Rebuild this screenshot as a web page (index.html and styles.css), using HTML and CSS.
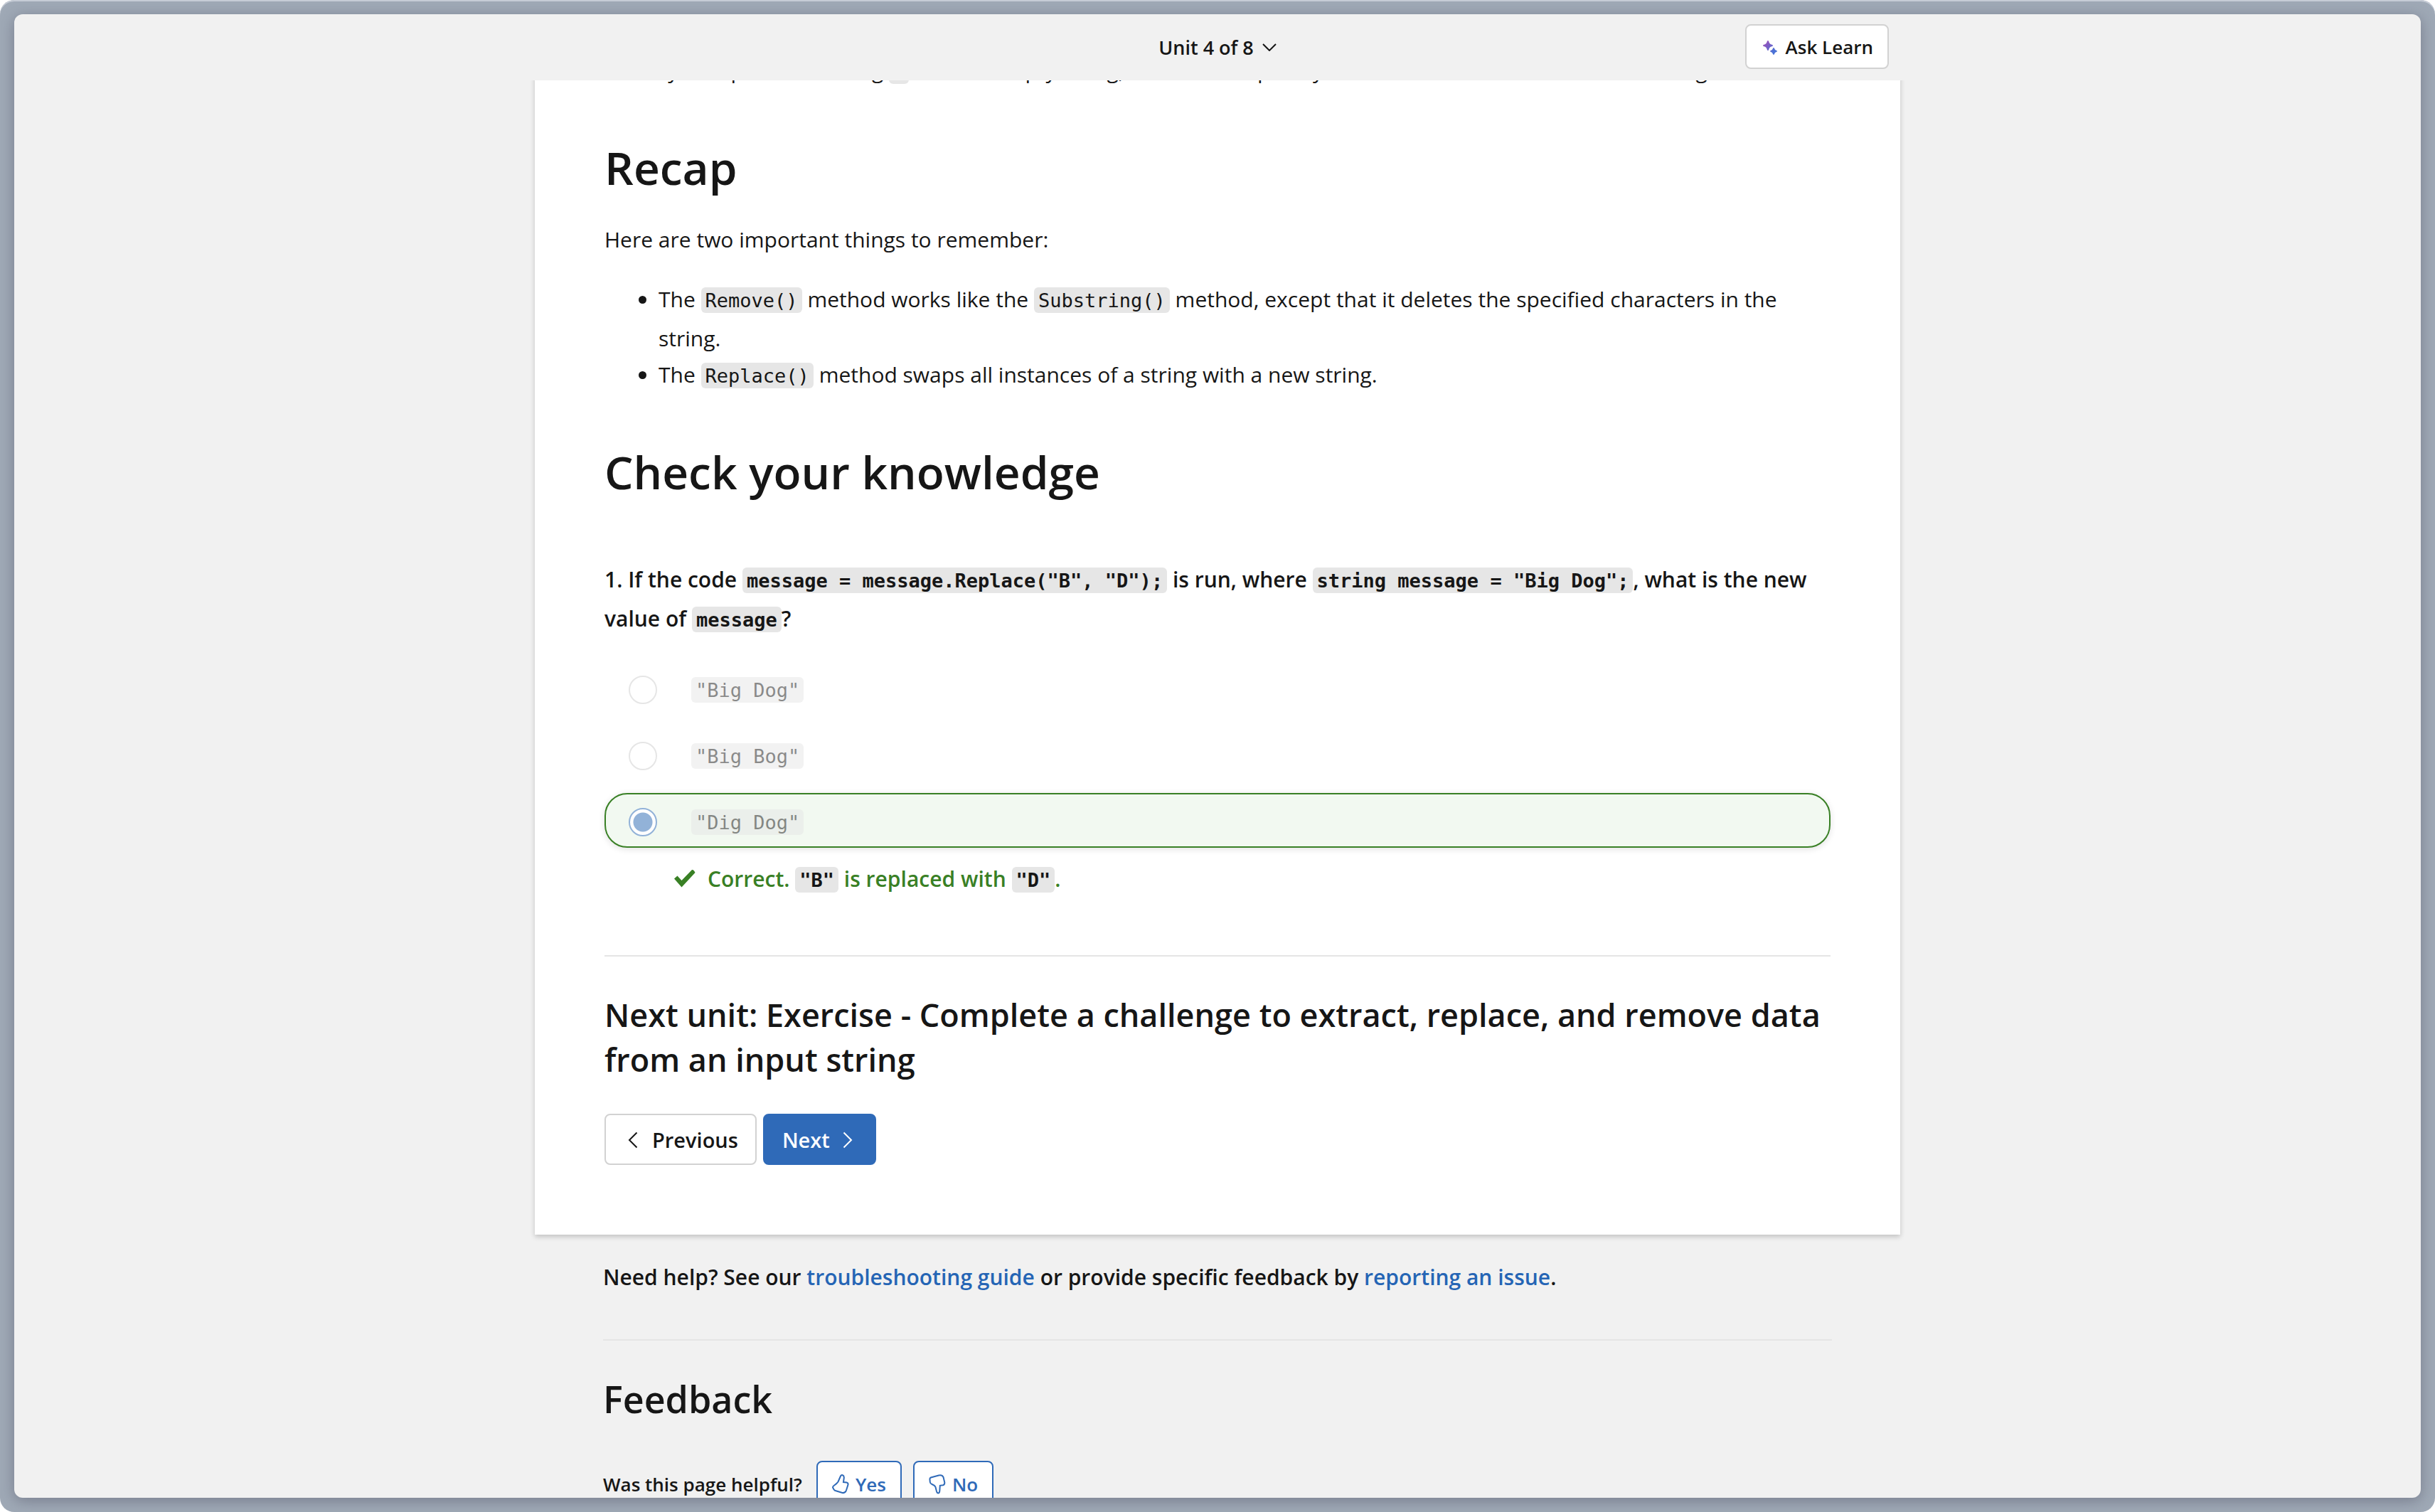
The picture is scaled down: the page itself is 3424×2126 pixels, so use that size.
FILE: index.html
```html
<!DOCTYPE html>
<html lang="en">
<head>
<meta charset="utf-8">
<title>Unit 4 of 8 - Training | Learn</title>
<link rel="stylesheet" href="styles.css">
</head>
<body>
<div class="frame">
  <div class="window">
    <header class="topbar">
      <div class="topbar-inner">
        <button class="unit-menu" type="button">Unit 4 of 8
          <svg class="chevron-down" viewBox="0 0 20 11" aria-hidden="true"><path d="M1 1l9 9 9-9"/></svg>
        </button>
        <button class="ask" type="button">
          <svg class="sparkle" viewBox="0 0 20 20" aria-hidden="true">
            <defs><linearGradient id="spark" x1="0" y1="0" x2="20" y2="20" gradientUnits="userSpaceOnUse"><stop offset=".2" stop-color="#8f55bd"/><stop offset=".75" stop-color="#4a72d6"/></linearGradient></defs>
            <path fill="url(#spark)" d="M7 0Q8 0 8.300 1.500Q9 5 12.500 5.700Q14 6 14 7Q14 8 12.500 8.300Q9 9 8.300 12.500Q8 14 7 14Q6 14 5.700 12.500Q5 9 1.500 8.300Q0 8 0 7Q0 6 1.500 5.700Q5 5 5.700 1.500Q6 0 7 0ZM15 10Q15.700 10 16 11Q16.600 13.400 19 14Q20 14.300 20 15Q20 15.700 19 16Q16.600 16.600 16 19Q15.700 20 15 20Q14.300 20 14 19Q13.400 16.600 11 16Q10 15.700 10 15Q10 14.300 11 14Q13.400 13.400 14 11Q14.300 10 15 10Z"/>
          </svg>
          Ask Learn
        </button>
      </div>
    </header>

    <main class="content">
      <article class="card">
        <p>When you replace the string <code>-</code> with an empty string, it would completely remove the characters from the string.</p>

        <h2>Recap</h2>
        <p class="intro">Here are two important things to remember:</p>
        <ul class="points">
          <li>The <code>Remove()</code> method works like the <code>Substring()</code> method, except that it deletes the specified characters in the string.</li>
          <li>The <code>Replace()</code> method swaps all instances of a string with a new string.</li>
        </ul>

        <h2>Check your knowledge</h2>
        <fieldset class="quiz">
          <legend class="question">1. If the code <code>message = message.Replace("B", "D");</code> is run, where <code>string message = "Big Dog";</code>, what is the new value of <code>message</code>?</legend>
          <div class="choices">
            <label class="choice"><input type="radio" name="answer" disabled><code>"Big Dog"</code></label>
            <label class="choice"><input type="radio" name="answer" disabled><code>"Big Bog"</code></label>
            <label class="choice is-correct"><input type="radio" name="answer" checked disabled><code>"Dig Dog"</code></label>
          </div>
          <div class="result">
            <svg class="check" viewBox="0 0 32 26" aria-hidden="true"><path d="M2 13.500L6.500 9.500L12.500 16L27 1Q29.500 .5 31.500 5L12.500 25.500Z"/></svg>
            <p>Correct. <code>"B"</code> is replaced with <code>"D"</code>.</p>
          </div>
        </fieldset>

        <hr>
        <h3>Next unit: Exercise - Complete a challenge to extract, replace, and remove data from an input string</h3>
        <nav class="pager">
          <button class="button previous" type="button"><svg class="chevron" viewBox="0 0 14 24" aria-hidden="true"><path d="M12.500 1.500L2 12l10.500 10.500"/></svg>Previous</button>
          <button class="button next" type="button">Next<svg class="chevron" viewBox="0 0 14 24" aria-hidden="true"><path d="M1.500 1.500L12 12 1.500 22.500"/></svg></button>
        </nav>
      </article>

      <section class="after">
        <p class="help">Need help? See our <a href="#guide">troubleshooting guide</a> or provide specific feedback by <a href="#issue">reporting an issue</a>.</p>
        <hr>
        <h2 class="feedback-title">Feedback</h2>
        <div class="rating">
          <span class="rating-label">Was this page helpful?</span>
          <button class="rate" type="button"><svg class="thumb" viewBox="0 0 24 28" aria-hidden="true"><path d="M1 18.500Q1 17 2.500 16Q7 13 8.500 10.500L12 2.500Q13 .5 15 1.300Q17 2 16.800 5L16 11L20.500 11.500Q22.800 12 22.500 14.500L20 22.500Q18.500 26.800 14.500 26L5.500 23.300Q3.500 23 2.500 21.300Z"/></svg>Yes</button>
          <button class="rate" type="button"><svg class="thumb" viewBox="0 0 24 28" aria-hidden="true"><path d="M1.500 7.500Q1 5.500 3 4.500L14 1.500Q19 .5 20.500 4L22.300 11.500Q22.500 14.500 20 15.300L15.800 15.800L15.300 23.500Q15 26.500 13.300 26.500Q11.800 26.500 11 24L9.500 18Q8.500 15.500 4.500 14Q2 13 1.800 11Z"/></svg>No</button>
        </div>
      </section>
    </main>
  </div>
</div>
</body>
</html>
```
FILE: styles.css
```css
* { box-sizing: border-box; }

body {
  margin: 0;
  background: #fff;
  color: #161616;
  font: 400 30px/51px "Open Sans", "Noto Sans", sans-serif;
}

h2, h3, p, ul, fieldset { margin: 0; padding: 0; border: 0; }

button { font: inherit; color: inherit; cursor: pointer; }

svg { flex: none; fill: none; stroke: currentColor; stroke-width: 2; }

a { color: #2565b5; text-decoration: none; }

hr { height: 2px; margin: 0; border: 0; background: #e5e5e5; }

code {
  padding: 3px 6px 2px;
  border-radius: 6px;
  background: #e6e6e6;
  color: #161616;
  font: 27px/54px "DejaVu Sans Mono", monospace;
  font-weight: inherit;
}

/* Desktop edge round the browser window */
.frame {
  height: 100vh;
  padding: 20px;
  border-radius: 20px;
  background: #9fa9b6;
  box-shadow: inset 0 2px 0 #c6ccd6;
  overflow: hidden;
}

.window {
  height: 100%;
  display: flex;
  flex-direction: column;
  border-radius: 12px;
  background: #f1f1f1;
  box-shadow: 0 4px 20px rgba(60, 60, 80, 0.4);
}

.topbar { flex: none; font-size: 26px; font-weight: 600; }

.topbar-inner {
  display: grid;
  grid-template-columns: 1fr auto 1fr;
  align-items: center;
  max-width: 1920px;
  margin: 0 auto;
  padding: 14px 16px 16px;
}

.unit-menu {
  grid-column: 2;
  display: flex;
  align-items: center;
  gap: 12px;
  padding: 2px 0 0;
  border: 0;
  background: none;
  font-size: 27px;
}

.chevron-down { width: 20px; height: 11px; }

.ask {
  justify-self: end;
  display: flex;
  align-items: center;
  gap: 12px;
  height: 63px;
  padding: 2px 20px 0 23px;
  border: 2px solid #d2d2d2;
  border-radius: 8px;
  background: #fff;
}

.sparkle { width: 20px; height: 20px; stroke: none; }

.content { flex: 1; min-height: 0; overflow: hidden; }

.card {
  max-width: 1920px;
  margin: -40px auto 0;
  padding: 0 98px 98px;
  background: #fff;
  box-shadow: 0 3px 7px rgba(0, 0, 0, 0.2);
}

h2 { margin-top: 66px; font-size: 64px; font-weight: 600; line-height: 84px; }

h3 { margin-top: 50px; font-size: 45px; font-weight: 600; line-height: 63px; }

.intro { margin-top: 33px; }

.points { margin-top: 33px; padding-left: 76px; }

.question { padding: 83px 0 0; font-weight: 600; }

.choices { display: grid; gap: 16px; margin-top: 30px; }

.choice {
  display: flex;
  align-items: center;
  gap: 48px;
  height: 77px;
  padding: 4px 32px 0;
  border: 2px solid transparent;
  border-radius: 32px;
}

.choice code { line-height: 31px; opacity: 0.5; }

.choice input {
  appearance: none;
  width: 40px;
  height: 40px;
  margin: 0;
  border: 2px solid #e6e6e6;
  border-radius: 50%;
  background: #fff;
}

.choice input:checked {
  border-color: #92b2d8;
  background: radial-gradient(circle, #92b2d8 13px, #fff 14px);
}

.is-correct {
  border-color: #398025;
  background: #f2f9f1;
  box-shadow: 0 2px 10px rgba(0, 0, 0, 0.12);
}

.result {
  display: flex;
  align-items: center;
  gap: 17px;
  margin: 18px 0 78px;
  padding-left: 96px;
  color: #398025;
  font-weight: 600;
}

.check { width: 32px; height: 26px; margin-bottom: 6px; fill: currentColor; stroke: none; }

.pager { display: flex; gap: 9px; margin-top: 45px; font-weight: 600; }

.button {
  display: flex;
  align-items: center;
  height: 72px;
  padding-top: 2px;
  border: 2px solid #d2d2d2;
  border-radius: 8px;
  background: #fff;
  font-size: 29px;
}

.previous { gap: 20px; padding-right: 24px; padding-left: 31px; }

.next { gap: 18px; padding-right: 31px; padding-left: 25px; border-color: #2f6ab8; background: #2f6ab8; color: #fff; }

.chevron { width: 14px; height: 24px; }

.after { max-width: 1920px; margin: 0 auto; padding: 34px 96px 0; font-weight: 600; }

.help { margin-bottom: 62px; }

.feedback-title { margin-top: 47px; font-size: 52px; line-height: 70px; }

.rating { display: flex; align-items: center; gap: 16px; margin-top: 52px; font-size: 26px; }

.rating-label { padding: 2px 4px 0 0; }

.rate {
  display: flex;
  align-items: center;
  gap: 9px;
  height: 64px;
  padding: 2px 20px 0;
  border: 2px solid #2f6ab8;
  border-radius: 8px;
  background: #fff;
  color: #2f6ab8;
}

.thumb { width: 24px; height: 28px; }
```
